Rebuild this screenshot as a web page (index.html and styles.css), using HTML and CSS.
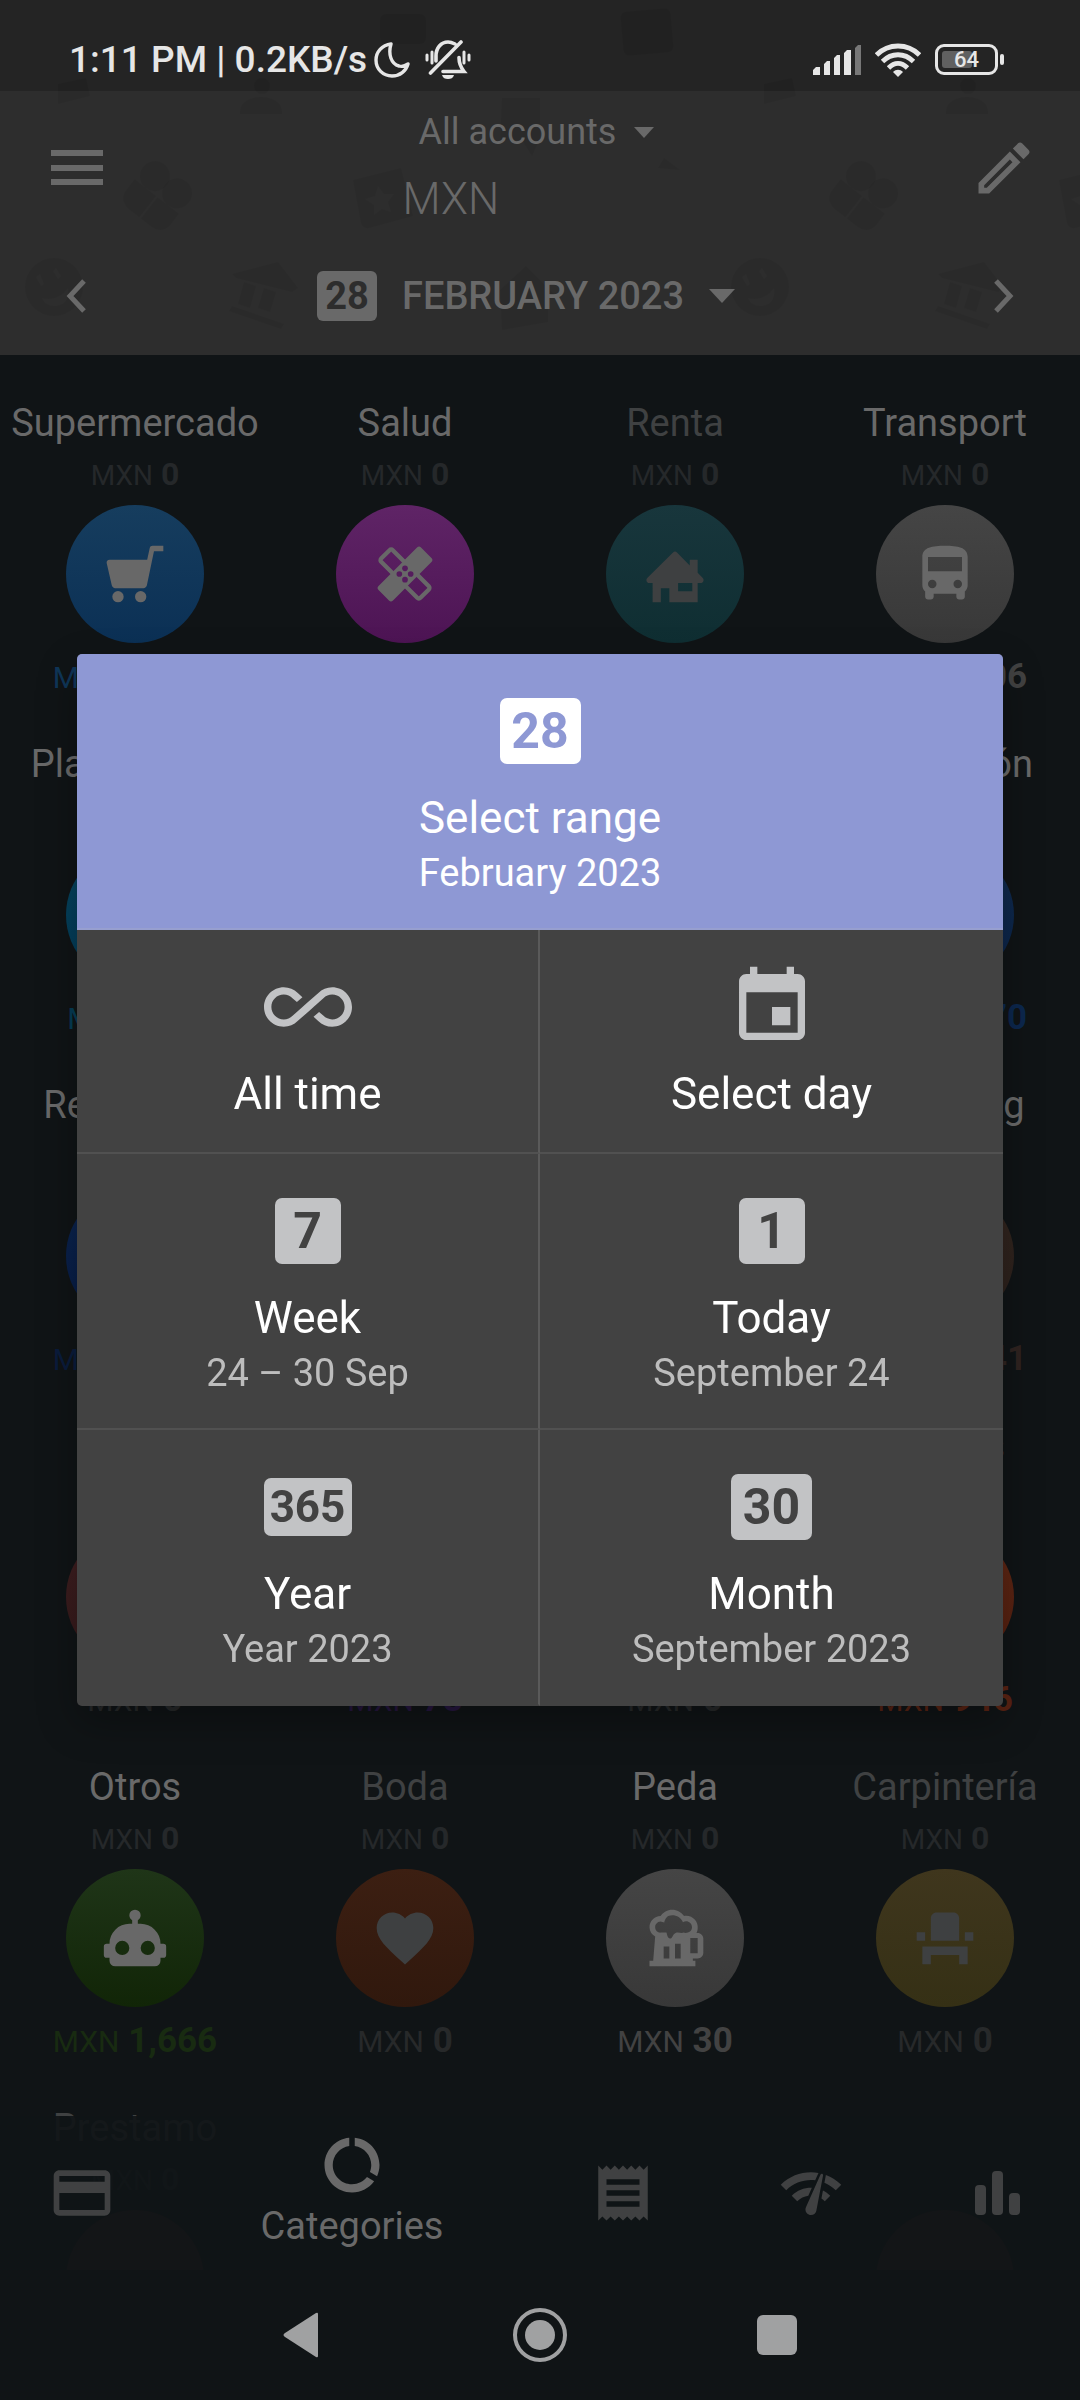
FILE: index.html
```html
<!DOCTYPE html>
<html lang="en">
<head>
<meta charset="utf-8">
<meta name="viewport" content="width=device-width, initial-scale=1">
<title>Categories</title>
<link rel="stylesheet" href="styles.css">
</head>
<body>
<div class="screen">
  <div class="top">
    <svg class="top-pattern" aria-hidden="true">
      <defs>
        <pattern id="doodles" width="706" height="355" patternUnits="userSpaceOnUse">
          <g fill="#000" fill-opacity=".06">
            <g transform="rotate(38 158 195)"><circle cx="144" cy="182" r="15"/><circle cx="172" cy="182" r="15"/><path d="M130 197h27v27h-15q-12-2-12-14zM159 197h27v15q-2 12-14 12h-13z"/></g>
            <path fill-rule="evenodd" d="M54 258a29 29 0 100 58 29 29 0 000-58zM40 274l4 10-3 2-5-9zM56 268l5 8-3 3-5-8zM42 298q16 4 26-10 2 16-12 18-10 1-14-8z"/>
            <path d="M232 274l46-12 20 26-6 4-56-14zM244 282l12 4-6 22-12-4zM264 288l12 4-6 20-12-4zM232 306l52 18-3 5-52-18z"/>
            <path fill-rule="evenodd" d="M353 180l48-12 12 48-44 12q-6 1-8-5zM378 186l-3 10-10 3 9 6 0 10 8-6 9 3-3-10 6-8h-10z"/>
            <path d="M240 112c0-20 42-20 42 0v2h-42z"/><circle cx="262" cy="86" r="8"/>
            <path d="M58 84l28-6 4 18-32 8z"/>
            <path d="M502 98h38v40l-8 18-10-16h-22zM500 290l26-24 30 30-8 2v24l-46 8zM658 168l6-10 16 12z"/>
            <rect x="622" y="10" width="50" height="44" rx="6" transform="rotate(-5 647 32)"/>
            <rect x="380" y="14" width="46" height="30" rx="6"/>
          </g>
        </pattern>
      </defs>
      <rect width="100%" height="100%" fill="url(#doodles)"/>
    </svg>
    <div class="status">
      <div class="status-group status-left">
        <span>1:11 PM | 0.2KB/s</span>
        <svg width="36" height="38" viewBox="0 0 36 38"><path d="M17 3C8 4 2 11 2 19c0 9 7 16 16 16 8 0 14-5 16-12-3 2-6 3-9 2-8-2-11-12-8-22z" fill="none" stroke="#e6e6e6" stroke-width="3.4" stroke-linejoin="round"/></svg>
        <svg class="bell" width="46" height="40" viewBox="0 0 46 40"><g fill="none" stroke="#e6e6e6" stroke-width="3" stroke-linecap="round"><path d="M2 15v5M7 12v11M39 12v11M44 15v5" /><path d="M11 21v-5c0-8 5-14 12-14 3 0 5 1 7 2M5.500 33L36 2" stroke-width="3.600"/><path d="M18 31.500h21c-4-5-5-8-5-14" stroke-width="3.600"/></g><path d="M17 35h12c-1 3-3 4-6 4s-5-1-6-4z" fill="#e6e6e6"/></svg>
      </div>
      <div class="status-group">
        <svg width="48" height="32" viewBox="0 0 48 32"><g fill="#e6e6e6"><path d="M0 31v-5l3-3h4v8zM11 31V20l3-3h3v14zM21 31V14l3-3h3v20zM31 31V9l3-3h4v25z"/><path d="M42 31V4l3-3h3v30z" fill="#777"/></g></svg>
        <svg width="46" height="34" viewBox="0 0 46 34"><g fill="none" stroke="#e6e6e6" stroke-width="4.800"><path d="M1.500 12c12-12 31-12 43 0M7.500 18.500c9-9 22-9 31 0M13.500 25c6-6 13-6 19 0"/></g><path d="M18 29c3-3 7-3 10 0l-5 5z" fill="#e6e6e6"/></svg>
        <span class="battery"><span class="battery-level" style="width:62%"></span><span class="battery-text">64</span></span>
      </div>
    </div>
    <header class="header">
      <div class="header-row">
        <button class="plain" aria-label="Menu"><svg width="52" height="36" viewBox="0 0 52 36"><path d="M0 0h52v6H0zM0 15h52v6H0zM0 29h52v6H0z" fill="currentColor"/></svg></button>
        <div class="account">
          <button class="plain account-name">All accounts <svg width="20" height="11" viewBox="0 0 20 11"><path d="M0 0h20L10 11z" fill="currentColor"/></svg></button>
          <div class="balance">MXN</div>
        </div>
        <button class="plain" aria-label="Edit"><svg width="68" height="68" viewBox="0 0 24 24"><path fill="currentColor" d="M14.060 9.020l.92.920L5.920 19H5v-.92l9.060-9.060M17.660 3c-.25 0-.51.1-.7.290l-1.830 1.830 3.750 3.750 1.830-1.830c.39-.39.39-1.020 0-1.410l-2.340-2.340c-.2-.2-.45-.29-.71-.29zm-3.600 3.190L3 17.250V21h3.750L17.810 9.940l-3.750-3.750z"/></svg></button>
      </div>
      <div class="date-row">
        <button class="plain" aria-label="Previous month"><svg width="20" height="34" viewBox="0 0 20 34"><path d="M18 2L4 17l14 15" fill="none" stroke="currentColor" stroke-width="5"/></svg></button>
        <button class="plain date"><span class="num num-s">28</span><span>FEBRUARY 2023</span><svg width="26" height="14" viewBox="0 0 26 14"><path d="M0 0h26L13 14z" fill="currentColor"/></svg></button>
        <button class="plain" aria-label="Next month"><svg width="20" height="34" viewBox="0 0 20 34"><path d="M2 2l14 15L2 32" fill="none" stroke="currentColor" stroke-width="5"/></svg></button>
      </div>
    </header>
  </div>

  <main class="categories">
    <div class="cat blue"><div class="name">Supermercado</div><div class="budget">MXN<b> 0</b></div>
      <div class="disc"><svg viewBox="0 0 24 24"><path d="M22 2h-3.800c-.5 0-.9.3-1 .8L16.300 7H3c-.7 0-1.100.5-1 1.100L3.800 16c.2.600.6 1 1.200 1h10c.6 0 1-.4 1.200-1L18.700 4H22z"/><circle cx="6" cy="20" r="2"/><circle cx="14" cy="20" r="2"/></svg></div>
      <div class="spent">MXN<b> 1,886</b></div></div>
    <div class="cat purple"><div class="name">Salud</div><div class="budget">MXN<b> 0</b></div>
      <div class="disc"><svg viewBox="0 0 24 24"><g transform="rotate(45 12 12)"><rect x="2.200" y="9.100" width="19.600" height="5.800" rx=".8" fill="none" stroke="currentColor" stroke-width="1.500"/><rect x="8.400" y="1.400" width="7.200" height="21.200" rx="1"/></g><g fill="#551c5d"><circle cx="12" cy="10" r="1"/><circle cx="10" cy="12" r="1"/><circle cx="14" cy="12" r="1"/><circle cx="12" cy="14" r="1"/></g></svg></div></div>
    <div class="cat teal dim"><div class="name">Renta</div><div class="budget">MXN<b> 0</b></div>
      <div class="disc"><svg viewBox="0 0 24 24"><path fill-rule="evenodd" d="M11.300 4.400c.4-.4 1-.4 1.400 0L17.200 9V7H20v4.600l1.800 1.800c.6.600.2 1.800-.7 1.800H20V22H10v-5H7v5H4.100v-6.800H2.900c-.9 0-1.300-1.200-.7-1.800zM13.100 15.200v2.900h5v-2.900z"/></svg></div></div>
    <div class="cat grey"><div class="name">Transport</div><div class="budget">MXN<b> 0</b></div>
      <div class="disc"><svg viewBox="0 0 24 24"><path d="M4 16c0 .88.39 1.670 1 2.220V20c0 .55.45 1 1 1h1c.55 0 1-.45 1-1v-1h8v1c0 .55.45 1 1 1h1c.55 0 1-.45 1-1v-1.780c.61-.55 1-1.340 1-2.220V6c0-3.500-3.580-4-8-4s-8 .5-8 4v10zm3.500 1c-.83 0-1.500-.67-1.500-1.500S6.670 14 7.500 14s1.500.67 1.500 1.500S8.330 17 7.500 17zm9 0c-.83 0-1.500-.67-1.500-1.500s.67-1.500 1.500-1.500 1.500.67 1.500 1.500-.67 1.500-1.500 1.500zm1.500-6H6V6h12v5z"/></svg></div>
      <div class="spent">MXN<b> 1,706</b></div></div>

    <div class="cat cyan"><div class="name">Plataformas</div><div class="budget"></div><div class="disc"></div><div class="spent">MXN<b> 799</b></div></div>
    <div class="cat empty"></div>
    <div class="cat empty"></div>
    <div class="cat navy"><div class="name">Educación</div><div class="budget"></div><div class="disc"></div><div class="spent">MXN<b> 1,070</b></div></div>

    <div class="cat royal"><div class="name">Restaurant</div><div class="budget"></div><div class="disc"></div><div class="spent">MXN<b> 1,500</b></div></div>
    <div class="cat empty"></div>
    <div class="cat empty"></div>
    <div class="cat brown"><div class="name">Shopping</div><div class="budget"></div><div class="disc"></div><div class="spent">MXN<b> 1,341</b></div></div>

    <div class="cat red"><div class="name"></div><div class="budget"></div><div class="disc"></div><div class="spent">MXN<b> 0</b></div></div>
    <div class="cat violet"><div class="name"></div><div class="budget"></div><div class="disc"></div><div class="spent">MXN<b> 78</b></div></div>
    <div class="cat teal dim"><div class="name"></div><div class="budget"></div><div class="disc"></div><div class="spent">MXN<b> 0</b></div></div>
    <div class="cat flame"><div class="name">Gastos</div><div class="budget"></div><div class="disc"></div><div class="spent">MXN<b> 946</b></div></div>

    <div class="cat green"><div class="name">Otros</div><div class="budget">MXN<b> 0</b></div>
      <div class="disc"><svg viewBox="0 0 24 24"><path d="M12 2a2 2 0 012 2c0 .74-.4 1.390-1 1.730V7h1a7 7 0 017 7h1a1 1 0 011 1v3a1 1 0 01-1 1h-1v1a2 2 0 01-2 2H5a2 2 0 01-2-2v-1H2a1 1 0 01-1-1v-3a1 1 0 011-1h1a7 7 0 017-7h1V5.730c-.6-.34-1-.99-1-1.730a2 2 0 012-2M7.500 13A2.500 2.500 0 005 15.500 2.500 2.500 0 007.500 18a2.500 2.500 0 002.500-2.500A2.500 2.500 0 007.500 13m9 0a2.500 2.500 0 00-2.500 2.500 2.500 2.500 0 002.500 2.500 2.500 2.500 0 002.500-2.500 2.500 2.500 0 00-2.500-2.500z"/></svg></div>
      <div class="spent">MXN<b> 1,666</b></div></div>
    <div class="cat orange dim"><div class="name">Boda</div><div class="budget">MXN<b> 0</b></div>
      <div class="disc"><svg viewBox="0 0 24 24"><path d="M12 21.350l-1.450-1.320C5.400 15.360 2 12.280 2 8.500 2 5.420 4.420 3 7.500 3c1.740 0 3.410.81 4.500 2.090C13.090 3.810 14.760 3 16.500 3 19.580 3 22 5.420 22 8.500c0 3.780-3.400 6.860-8.550 11.540L12 21.350z"/></svg></div>
      <div class="spent">MXN<b> 0</b></div></div>
    <div class="cat grey"><div class="name">Peda</div><div class="budget">MXN<b> 0</b></div>
      <div class="disc"><svg viewBox="0 0 24 24"><path fill-rule="evenodd" d="M5 11.500C3.800 10.800 3 9.600 3 8.200 3 6 4.700 4.300 6.900 4.200 7.800 2.900 9.300 2 11 2s3.300.9 4.200 2.200c3-.4 5.200 2 4.800 4.700-.1.500-.2.900-.4 1.300h.4c1.100 0 2 .9 2 2v5c0 1.100-.9 2-2 2h-1.700v.8h.9v2H3v-2h1.300zM8 15v4.200h2V15zM12 14v5.200h2V14zM17.400 12v5.400H20V12zM6.900 6.200C5.700 6.300 5 7.200 5 8.200c0 1.200 1 2 2 1.900h2c.3 1.300.5 2.100 1.200 2.100 1 0 .8-1.400 2-2 1.100-.5 1.900.3 2.800-.1 1.300.4 3-.3 3-1.900s-1.700-2.600-3.200-1.800C14.100 4.900 12.700 4 11 4S8.600 5 8.200 6.500z"/></svg></div>
      <div class="spent">MXN<b> 30</b></div></div>
    <div class="cat yellow dim"><div class="name">Carpintería</div><div class="budget">MXN<b> 0</b></div>
      <div class="disc"><svg viewBox="0 0 24 24"><path d="M4 18v3.300h3V18h10v3.300h3V15H4zm15-8h3v3h-3zM2 10h3v3H2zm15 3H7V5c0-1.100.9-2 2-2h6c1.100 0 2 .9 2 2v8z"/></svg></div>
      <div class="spent">MXN<b> 0</b></div></div>

    <div class="cat last dim"><div class="name">Prestamo</div><div class="budget">MXN<b> 0</b></div><div class="disc"></div></div>
    <div class="cat empty"></div>
    <div class="cat empty"></div>
    <div class="cat last"><div class="name"></div><div class="budget"></div><div class="disc"></div></div>
  </main>

  <nav class="tabs">
    <a href="#accounts" aria-label="Accounts"><svg width="68" height="68" viewBox="0 0 24 24"><path fill="currentColor" d="M20 4H4c-1.110 0-1.990.89-1.990 2L2 18c0 1.110.89 2 2 2h16c1.110 0 2-.89 2-2V6c0-1.110-.89-2-2-2zm0 14H4v-6h16v6zm0-10H4V6h16v2z"/></svg></a>
    <a class="active" href="#categories"><svg width="66" height="66" viewBox="0 0 24 24"><path fill="currentColor" d="M13 2.050v3.030c3.390.49 6 3.390 6 6.920 0 .9-.18 1.750-.48 2.540l2.600 1.530c.56-1.240.88-2.620.88-4.070 0-5.180-3.950-9.450-9-9.950zM12 19c-3.870 0-7-3.130-7-7 0-3.530 2.610-6.430 6-6.920V2.050c-5.060.49-9 4.760-9 9.950 0 5.520 4.470 10 9.990 10 3.310 0 6.240-1.610 8.060-4.090l-2.600-1.530C16.170 17.980 14.210 19 12 19z"/></svg><span>Categories</span></a>
    <a href="#transactions" aria-label="Transactions"><svg width="66" height="66" viewBox="0 0 24 24"><path fill="currentColor" d="M18 17H6v-2h12v2zm0-4H6v-2h12v2zm0-4H6V7h12v2zM3 22l1.500-1.500L6 22l1.500-1.500L9 22l1.500-1.500L12 22l1.500-1.500L15 22l1.500-1.500L18 22l1.500-1.500L21 22V2l-1.500 1.500L18 2l-1.500 1.500L15 2l-1.500 1.500L12 2l-1.500 1.500L9 2 7.500 3.500 6 2 4.500 3.500 3 2v20z"/></svg></a>
    <a href="#budget" aria-label="Budget"><svg width="66" height="66" viewBox="0 0 24 24"><path fill="currentColor" d="M15.900 5c-.17 0-.32.090-.41.230l-.07.150-5.180 11.650c-.16.290-.26.610-.26.960 0 1.110.9 2.010 2.010 2.010.96 0 1.770-.68 1.960-1.590l.01-.03L16.400 5.500c0-.28-.22-.5-.5-.5zM1 9l2 2c2.880-2.880 6.790-4.080 10.530-3.620l1.190-2.680C9.890 3.840 4.740 5.270 1 9zm20 2l2-2c-1.640-1.640-3.550-2.820-5.590-3.570l-.53 2.820c1.500.62 2.900 1.530 4.120 2.750zm-4 4l2-2c-.8-.8-1.700-1.420-2.660-1.890l-.55 2.920c.42.270.83.590 1.210.970zM5 13l2 2c1.130-1.130 2.560-1.790 4.030-2l1.280-2.880c-2.630-.08-5.300.87-7.310 2.880z"/></svg></a>
    <a href="#overview" aria-label="Overview"><svg width="46" height="46" viewBox="0 0 46 46"><g fill="currentColor"><rect y="15" width="11" height="30" rx="4"/><rect x="17" y="1" width="11" height="44" rx="4"/><rect x="34" y="23" width="11" height="22" rx="4"/></g></svg></a>
  </nav>

  <div class="system-nav">
    <button class="plain" aria-label="Back"><svg width="54" height="54" viewBox="0 0 54 54"><path d="M42 6v42q0 2-2 1L9 29q-3-2 0-4L40 5q2-1 2 1z" fill="currentColor"/></svg></button>
    <button class="plain" aria-label="Home"><svg width="56" height="56" viewBox="0 0 56 56"><circle cx="28" cy="28" r="25" fill="none" stroke="currentColor" stroke-width="4"/><circle cx="28" cy="28" r="15" fill="currentColor"/></svg></button>
    <button class="plain" aria-label="Recent apps"><svg width="54" height="54" viewBox="0 0 54 54"><rect x="7" y="7" width="40" height="40" rx="6" fill="currentColor"/></svg></button>
  </div>
</div>

<div class="scrim">
  <div class="dialog" role="dialog" aria-labelledby="range-title">
    <div class="option range-head"><span class="icon"><span class="num">28</span></span><span class="title" id="range-title">Select range</span><span class="sub">February 2023</span></div>
    <div class="options">
      <button class="option"><span class="icon"><svg width="88" height="88" viewBox="0 0 24 24"><path fill="currentColor" d="M18.600 6.620c-1.440 0-2.800.56-3.770 1.530L12 10.660 10.480 12h.01L7.800 14.390c-.64.640-1.490.990-2.400.990-1.870 0-3.390-1.510-3.390-3.380S3.530 8.620 5.400 8.620c.91 0 1.760.35 2.440 1.030l1.130 1 1.510-1.340L9.220 8.200C8.200 7.180 6.840 6.620 5.400 6.620 2.420 6.620 0 9.040 0 12s2.420 5.380 5.400 5.380c1.440 0 2.800-.56 3.770-1.530l2.830-2.500.01.010L13.520 12h-.01l2.690-2.390c.64-.64 1.490-.99 2.400-.99 1.870 0 3.390 1.510 3.390 3.380s-1.520 3.380-3.390 3.380c-.9 0-1.760-.35-2.440-1.030l-1.140-1.010-1.510 1.340 1.270 1.120c1.020 1.010 2.370 1.570 3.820 1.570 2.980 0 5.400-2.410 5.400-5.380s-2.420-5.370-5.400-5.370z"/></svg></span><span class="title">All time</span></button>
      <button class="option"><span class="icon"><svg width="88" height="88" viewBox="0 0 24 24"><path fill="currentColor" d="M17 12v5h-5v-5zM16 1v2H8V1H6v2H5c-1.110 0-1.990.9-1.990 2L3 19c0 1.100.89 2 2 2h14c1.100 0 2-.9 2-2V5c0-1.100-.9-2-2-2h-1V1h-2zm3 18H5V8h14v11z"/></svg></span><span class="title">Select day</span></button>
      <button class="option"><span class="icon"><span class="num num-one">7</span></span><span class="title">Week</span><span class="sub">24 – 30 Sep</span></button>
      <button class="option"><span class="icon"><span class="num num-one">1</span></span><span class="title">Today</span><span class="sub">September 24</span></button>
      <button class="option"><span class="icon"><span class="num num-year">365</span></span><span class="title">Year</span><span class="sub">Year 2023</span></button>
      <button class="option"><span class="icon"><span class="num">30</span></span><span class="title">Month</span><span class="sub">September 2023</span></button>
    </div>
  </div>
</div>
</body>
</html>
```
FILE: styles.css
```css
* { box-sizing: border-box; }

body {
  margin: 0;
  background: #101416;
  color: #696969;
  font-family: Roboto, "Liberation Sans", sans-serif;
}

svg { display: block; flex: none; }

button, a {
  font: inherit;
  color: inherit;
  text-decoration: none;
}

.plain {
  padding: 0;
  border: 0;
  background: none;
}

.screen {
  position: relative;
  display: flex;
  flex-direction: column;
  height: 100vh;
  overflow: hidden;
}

/* Status bar and app header */
.top {
  position: relative;
  background: #2d2d2d;
}

.top-pattern {
  position: absolute;
  inset: 0;
  width: 100%;
  height: 100%;
}

.status {
  position: relative;
  display: flex;
  justify-content: space-between;
  align-items: center;
  height: 91px;
  padding: 28px 82px 0 69px;
  background: rgba(0, 0, 0, 0.2);
  color: #e6e6e6;
  font-size: 37px;
  font-weight: 500;
  line-height: 42px;
}

.status-group {
  display: flex;
  align-items: center;
  gap: 14px;
}

.status-left { gap: 7px; }

.bell { margin-left: 8px; }

.battery {
  position: relative;
  display: flex;
  width: 63px;
  height: 31px;
  padding: 4px;
  border: 3px solid #e6e6e6;
  border-radius: 9px;
}

.battery::after {
  content: "";
  position: absolute;
  left: 62px;
  top: 7px;
  width: 4px;
  height: 11px;
  border-radius: 2px;
  background: #e6e6e6;
}

.battery-level {
  border-radius: 3px;
  background: #606060;
}

.battery-text {
  position: absolute;
  inset: 0;
  font-size: 22px;
  line-height: 26px;
  text-align: center;
}

.header {
  position: relative;
  padding: 20px 42px 23px 51px;
}

.header-row, .date-row {
  display: flex;
  justify-content: space-between;
  align-items: center;
}

.account {
  width: 268px;
  display: flex;
  flex-direction: column;
  gap: 20px;
}

.account-name {
  display: flex;
  justify-content: center;
  align-items: center;
  gap: 18px;
  font-size: 36px;
  line-height: 42px;
}

.balance {
  font-size: 44px;
  font-weight: 300;
  line-height: 52px;
}

.date-row {
  height: 72px;
  margin-top: 35px;
  padding: 0 24px 0 15px;
}

.date {
  display: flex;
  align-items: center;
  gap: 25px;
  margin-right: 28px;
  font-size: 38px;
  font-weight: 500;
}

/* Rounded tile with a day count in it */
.num {
  display: flex;
  justify-content: center;
  align-items: center;
  width: 81px;
  height: 66px;
  border-radius: 7px;
  background: #c2c3c5;
  color: #424242;
  font-size: 50px;
  font-weight: 700;
  line-height: 1;
}

.num-s {
  width: 60px;
  height: 50px;
  border-radius: 6px;
  background: #696969;
  color: #2d2d2d;
  font-size: 38px;
}

.num-one { width: 66px; }

.num-year {
  width: 88px;
  height: 58px;
  font-size: 44px;
}

/* Category grid */
.categories {
  flex: 1;
  min-height: 0;
  overflow: hidden;
  display: grid;
  grid-template-columns: repeat(4, 1fr);
  align-content: start;
  row-gap: 42px;
  padding-top: 46px;
}

.cat {
  --icon: #686868;
  --amount: #27292a;
  display: grid;
  grid-template-rows: 44px 38px 138px 46px;
  row-gap: 11px;
  height: 299px;
  justify-items: center;
  white-space: nowrap;
}

.dim { --icon: #3e4041; }

.name {
  font-size: 38px;
  line-height: 44px;
}

.dim .name { color: #3f4142; }

.budget {
  color: #25282a;
  font-size: 28px;
  line-height: 36px;
}

.budget b { font-size: 32px; }

.disc {
  display: grid;
  place-items: center;
  width: 138px;
  height: 138px;
  border-radius: 50%;
  background: linear-gradient(var(--from), var(--to));
  color: var(--icon);
}

.disc svg {
  width: 68px;
  height: 68px;
  fill: currentColor;
}

.spent {
  color: var(--amount);
  font-size: 30px;
  line-height: 46px;
}

.spent b { font-size: 35px; }

.blue { --from: #163d5e; --to: #0b3055; --amount: #0f3658; }
.purple { --from: #5f2466; --to: #4d1454; }
.teal { --from: #18363c; --to: #0f2e32; }
.grey { --from: #454545; --to: #383838; --amount: #424242; }
.cyan { --from: #07455f; --to: #013a57; --amount: #063c54; }
.navy { --from: #112c50; --to: #0a2348; --amount: #0c274d; }
.royal { --from: #0c2550; --to: #061b44; --amount: #0a1c3c; }
.brown { --from: #33261f; --to: #2b201c; --amount: #2f2320; }
.red { --from: #401f21; --to: #34191a; }
.violet { --from: #24183f; --to: #1e1238; --amount: #26163f; }
.flame { --from: #602815; --to: #531e0f; --amount: #5a2313; }
.green { --from: #1f3518; --to: #112507; --amount: #182b11; }
.orange { --from: #3c1f12; --to: #30180d; }
.yellow { --from: #3f361d; --to: #353015; }
.last { --from: #34201f; --to: #34201f; }

.tabs {
  position: absolute;
  left: 0;
  right: 0;
  bottom: 130px;
  height: 154px;
  display: grid;
  grid-template-columns: 164fr 376fr 166fr 210fr 164fr;
  align-items: center;
  justify-items: center;
  background: rgba(16, 20, 22, 0.9);
  color: #404142;
}

.active {
  display: flex;
  flex-direction: column;
  align-items: center;
  gap: 6px;
  padding-bottom: 6px;
  color: #696969;
  font-size: 38px;
  line-height: 44px;
}

.system-nav {
  display: flex;
  justify-content: center;
  align-items: center;
  gap: 182px;
  height: 130px;
  background: #101416;
  color: #a0a1a2;
}

/* Range dialog */
.scrim {
  position: fixed;
  inset: 0;
  display: flex;
  align-items: center;
  padding: 90px 77px 130px;
}

.dialog {
  flex: 1;
  overflow: hidden;
  border-radius: 5px;
  background: #424242;
  box-shadow: 0 16px 40px rgba(0, 0, 0, 0.3);
}

.options {
  display: grid;
  grid-template-columns: 1fr 1fr;
}

.option {
  display: flex;
  flex-direction: column;
  align-items: center;
  padding: 33px 0 32px;
  border: 0;
  border-bottom: 2px solid #515151;
  background: none;
  color: #fff;
}

.options .option:nth-child(odd) { border-right: 2px solid #5a5a5a; }

.options .option:nth-last-child(-n+2) { border-bottom-color: transparent; }

.range-head {
  border-bottom-color: #979fcf;
  background: #8e98d4;
}

.icon {
  display: grid;
  place-items: center;
  height: 88px;
  color: #c2c3c5;
}

.range-head .num {
  background: #fff;
  color: #8e98d4;
}

.title {
  margin-top: 17px;
  font-size: 44px;
  line-height: 52px;
}

.sub {
  margin-top: 7px;
  font-size: 38px;
  line-height: 45px;
  color: #bdbdbd;
}

.range-head .sub { color: #fff; }
```
